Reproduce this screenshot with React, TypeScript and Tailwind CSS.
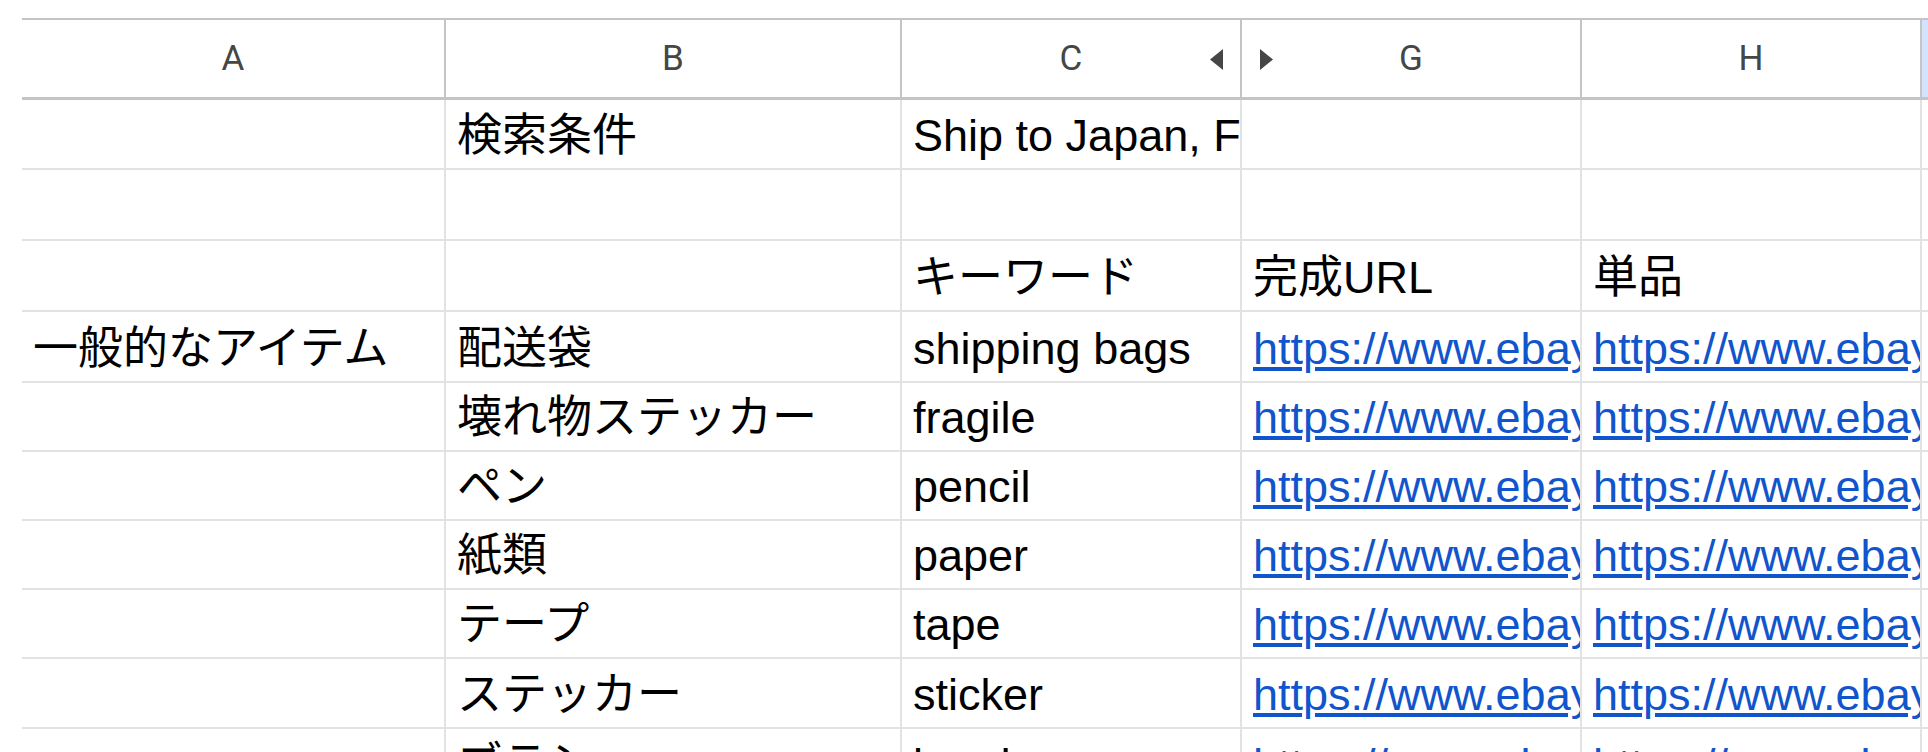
import { FC } from "react";

type Row = {
  h: string;
  a?: string;
  b?: string;
  c?: string;
  g?: string;
  hh?: string;
  link?: boolean;
};

const EBAY = "https://www.ebay.com/sch/i.html?_nkw=";

const rows: Row[] = [
  { h: "h-[70px]", b: "検索条件", c: "Ship to Japan, F" },
  { h: "h-[71px]" },
  { h: "h-[71px]", c: "キーワード", g: "完成URL", hh: "単品" },
  { h: "h-[70.7px]", a: "一般的なアイテム", b: "配送袋", c: "shipping bags", link: true },
  { h: "h-[69.2px]", b: "壊れ物ステッカー", c: "fragile", link: true },
  { h: "h-[69.2px]", b: "ペン", c: "pencil", link: true },
  { h: "h-[69.2px]", b: "紙類", c: "paper", link: true },
  { h: "h-[69.2px]", b: "テープ", c: "tape", link: true },
  { h: "h-[70px]", b: "ステッカー", c: "sticker", link: true },
  { h: "h-[70px]", b: "ブラシ", c: "brush", link: true },
];

const Cell: FC<{ w: string; text?: string; link?: boolean }> = ({
  w,
  text,
  link,
}) => (
  <div
    className={`${w} h-full shrink-0 flex items-end overflow-hidden whitespace-nowrap border-r-2 border-[#e2e2e2] pl-[11px] pb-[10px]`}
  >
    {text &&
      (link ? (
        <span className="leading-[45px] text-[#1155cc] underline">{text}</span>
      ) : (
        <span className="leading-[45px] text-black">{text}</span>
      ))}
  </div>
);

const HeaderCell: FC<{ w: string; label: string; arrow?: "left" | "right" }> = ({
  w,
  label,
  arrow,
}) => (
  <div
    className={`${w} relative h-full shrink-0 flex items-center justify-center border-r-2 border-[#c4c4c4]`}
  >
    <span className="font-['Roboto',sans-serif] text-[35px] leading-none text-[#444746]">
      {label}
    </span>
    {arrow === "left" && (
      <svg
        className="absolute right-[17px] top-[29px]"
        width="13"
        height="21"
        viewBox="0 0 13 21"
      >
        <path d="M13 0 L0 10.5 L13 21 Z" fill="#444746" />
      </svg>
    )}
    {arrow === "right" && (
      <svg
        className="absolute left-[18px] top-[29px]"
        width="13"
        height="21"
        viewBox="0 0 13 21"
      >
        <path d="M0 0 L13 10.5 L0 21 Z" fill="#444746" />
      </svg>
    )}
  </div>
);

const App: FC = () => {
  return (
    <div className="w-[1928px] h-[752px] overflow-hidden bg-white">
      <div className="ml-[22px] pt-[18px] font-['Liberation_Sans','Noto_Sans_CJK_JP',sans-serif] text-[45px]">
        <div className="flex h-[82px] border-t-2 border-b-[3px] border-[#c4c4c4]">
          <HeaderCell w="w-[424px]" label="A" />
          <HeaderCell w="w-[456px]" label="B" />
          <HeaderCell w="w-[340px]" label="C" arrow="left" />
          <HeaderCell w="w-[340px]" label="G" arrow="right" />
          <HeaderCell w="w-[340px]" label="H" />
          <div className="flex-1 h-full bg-[#d3e3fd]" />
        </div>
        {rows.map((r, i) => (
          <div key={i} className={`flex ${r.h} border-b-2 border-[#e2e2e2]`}>
            <Cell w="w-[424px]" text={r.a} />
            <Cell w="w-[456px]" text={r.b} />
            <Cell w="w-[340px]" text={r.c} />
            <Cell
              w="w-[340px]"
              text={r.link ? EBAY + encodeURIComponent(r.c ?? "") : r.g}
              link={r.link}
            />
            <Cell
              w="w-[340px]"
              text={
                r.link
                  ? EBAY + encodeURIComponent(r.c ?? "") + "&LH_BIN=1"
                  : r.hh
              }
              link={r.link}
            />
            <div className="flex-1 h-full" />
          </div>
        ))}
      </div>
    </div>
  );
};

export default App;
